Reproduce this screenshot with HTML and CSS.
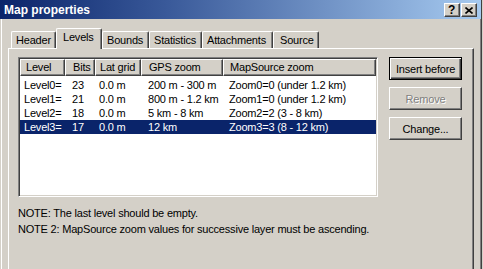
FILE: index.html
```html
<!DOCTYPE html>
<html>
<head>
<meta charset="utf-8">
<link rel="stylesheet" href="styles.css">
</head>
<body>
<div class="window">
  <div class="titlebar">
    <span class="title">Map properties</span>
    <div class="caption-btns">
      <div class="cbtn help">?</div>
      <div class="cbtn close"><svg width="8" height="7" viewBox="0 0 8 7"><path d="M0.5 0.5 L7.5 6.5 M7.5 0.5 L0.5 6.5" stroke="#000" stroke-width="1.6" fill="none"/></svg></div>
    </div>
  </div>
  <div class="client">
    <div class="tabs">
      <div class="tab w-header">Header</div>
      <div class="tab active w-levels">Levels</div>
      <div class="tab w-bounds">Bounds</div>
      <div class="tab w-stats">Statistics</div>
      <div class="tab w-attach">Attachments</div>
      <div class="tab w-source">Source</div>
    </div>
    <div class="panel">
      <div class="left">
        <div class="list">
          <div class="lv-header">
            <div class="hc c1">Level</div>
            <div class="hc c2">Bits</div>
            <div class="hc c3">Lat grid</div>
            <div class="hc c4">GPS zoom</div>
            <div class="hc c5">MapSource zoom</div>
          </div>
          <div class="rows">
            <div class="row"><span class="c1">Level0=</span><span class="c2">23</span><span class="c3">0.0 m</span><span class="c4">200 m - 300 m</span><span class="c5">Zoom0=0 (under 1.2 km)</span></div>
            <div class="row"><span class="c1">Level1=</span><span class="c2">21</span><span class="c3">0.0 m</span><span class="c4">800 m - 1.2 km</span><span class="c5">Zoom1=0 (under 1.2 km)</span></div>
            <div class="row"><span class="c1">Level2=</span><span class="c2">18</span><span class="c3">0.0 m</span><span class="c4">5 km - 8 km</span><span class="c5">Zoom2=2 (3 - 8 km)</span></div>
            <div class="row selected"><span class="c1">Level3=</span><span class="c2">17</span><span class="c3">0.0 m</span><span class="c4">12 km</span><span class="c5">Zoom3=3 (8 - 12 km)</span></div>
          </div>
        </div>
        <div class="notes">
          <p>NOTE: The last level should be empty.</p>
          <p>NOTE 2: MapSource zoom values for successive layer must be ascending.</p>
        </div>
      </div>
      <div class="buttons">
        <div class="btn default"><span>Insert before</span></div>
        <div class="btn disabled"><span>Remove</span></div>
        <div class="btn"><span>Change...</span></div>
      </div>
    </div>
  </div>
</div>
</body>
</html>
```

FILE: styles.css
```css
html, body {
  margin: 0;
  padding: 0;
}
body {
  width: 483px;
  height: 269px;
  overflow: hidden;
  background: #d4d0c8;
  font-family: "Liberation Sans", Arial, sans-serif;
  font-size: 11px;
  letter-spacing: -0.2px;
  color: #000;
}
.window {
  width: 482px;
  height: 269px;
  box-sizing: border-box;
  border-right: 1px solid #404040;
  display: flex;
  flex-direction: column;
}
.titlebar {
  height: 19px;
  flex: none;
  display: flex;
  align-items: center;
  justify-content: space-between;
  padding: 0 4px 0 4px;
  background: linear-gradient(to right, #0a246a 0%, #3a5a9a 35%, #a6caf0 100%);
}
.title {
  color: #fff;
  font-weight: bold;
  font-size: 12px;
  letter-spacing: 0;
}
.caption-btns {
  display: flex;
  gap: 1px;
  padding-top: 1px;
}
.cbtn {
  width: 16px;
  height: 14px;
  box-sizing: border-box;
  background: #d4d0c8;
  border-top: 1px solid #fff;
  border-left: 1px solid #fff;
  border-right: 1px solid #404040;
  border-bottom: 1px solid #404040;
  box-shadow: inset -1px -1px 0 #808080;
  display: flex;
  align-items: center;
  justify-content: center;
}
.help {
  font-weight: bold;
  font-size: 12px;
  line-height: 12px;
  padding-right: 1px;
}
.close svg {
  display: block;
  margin-right: 1px;
}
.client {
  flex: 1;
  margin-left: 1px;
  border-left: 1px solid #fff;
  border-right: 1px solid #808080;
  padding-top: 9px;
  display: flex;
  flex-direction: column;
}
.tabs {
  height: 20px;
  padding-left: 9px;
  display: flex;
  align-items: flex-end;
}
.tab {
  height: 17px;
  box-sizing: border-box;
  border-top: 1px solid #fff;
  border-left: 1px solid #fff;
  border-right: 1px solid #404040;
  box-shadow: inset -1px 0 0 #808080;
  border-radius: 2px 2px 0 0;
  padding-left: 4px;
  line-height: 16px;
  white-space: nowrap;
}
.tab.active {
  height: 21px;
  margin-bottom: -1px;
  position: relative;
  z-index: 1;
  background: #d4d0c8;
  padding-left: 6px;
  line-height: 17px;
}
.w-header { width: 45px; }
.w-levels { width: 46px; }
.w-bounds { width: 47px; }
.w-stats { width: 53px; }
.w-attach { width: 71px; }
.w-source { width: 46px; padding-left: 6px; }
.panel {
  flex: 1;
  margin-left: 6px;
  width: 466px;
  box-sizing: border-box;
  border-top: 1px solid #fff;
  border-left: 1px solid #fff;
  border-right: 1px solid #404040;
  box-shadow: inset -1px 0 0 #808080;
  padding: 8px 0 0 9px;
  display: flex;
}
.left {
  width: 360px;
}
.list {
  width: 360px;
  height: 140px;
  box-sizing: border-box;
  background: #fff;
  border-top: 1px solid #808080;
  border-left: 1px solid #808080;
  border-right: 1px solid #fff;
  border-bottom: 1px solid #fff;
  box-shadow: inset 1px 1px 0 #404040, inset -1px -1px 0 #d4d0c8;
  padding: 1px;
}
.lv-header {
  display: flex;
  height: 17px;
}
.hc {
  height: 17px;
  box-sizing: border-box;
  background: #d4d0c8;
  border-top: 1px solid #fff;
  border-left: 1px solid #fff;
  border-right: 1px solid #404040;
  border-bottom: 1px solid #404040;
  box-shadow: inset -1px -1px 0 #808080;
  line-height: 15px;
  white-space: nowrap;
}
.c1 { width: 45px; padding-left: 4px; }
.c2 { width: 30px; padding-left: 7px; }
.c3 { width: 46px; padding-left: 4px; }
.c4 { width: 82px; padding-left: 7px; }
.c5 { width: 153px; padding-left: 6px; }
.hc.c1 { padding-left: 5px; }
.lv-header .hc, .row span {
  box-sizing: border-box;
  flex: none;
}
.rows {
  padding-top: 2px;
}
.row {
  display: flex;
  height: 14px;
  line-height: 14px;
  white-space: nowrap;
}
.row span {
  display: block;
  overflow: hidden;
}
.row.selected {
  background: #0a246a;
  color: #fff;
}
.notes {
  margin-top: 8px;
  line-height: 16px;
}
.notes p {
  margin: 0;
  white-space: nowrap;
}
.buttons {
  margin-left: 11px;
  display: flex;
  flex-direction: column;
  gap: 7px;
}
.btn {
  width: 73px;
  height: 23px;
  box-sizing: border-box;
  background: #d4d0c8;
  border-top: 1px solid #fff;
  border-left: 1px solid #fff;
  border-right: 1px solid #404040;
  border-bottom: 1px solid #404040;
  box-shadow: inset -1px -1px 0 #808080;
  display: flex;
  align-items: center;
  justify-content: center;
  white-space: nowrap;
}
.btn.default {
  border: 1px solid #000;
  box-shadow: inset 1px 1px 0 #fff, inset -1px -1px 0 #404040, inset -2px -2px 0 #808080;
}
.btn.disabled {
  color: #808080;
  text-shadow: 1px 1px 0 #fff;
}
```
